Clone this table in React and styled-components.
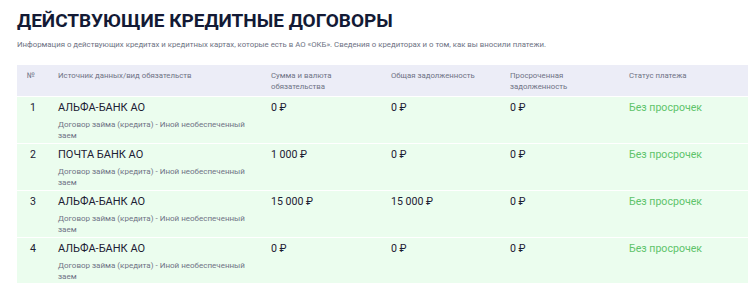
import React from "react";
import styled, { createGlobalStyle } from "styled-components";

const GlobalStyle = createGlobalStyle`
  body {
    margin: 0;
    background: #ffffff;
    font-family: Roboto, "Noto Sans", sans-serif;
    overflow: hidden;
  }
`;

const Page = styled.div`
  padding: 10px 0 0 17px;
`;

const Title = styled.h1`
  margin: 0;
  font-size: 19px;
  line-height: 22px;
  font-weight: 700;
  color: #131a35;
`;

const Subtitle = styled.p`
  margin: 7px 0 0;
  font-size: 7.8px;
  line-height: 11px;
  color: #6d7283;
`;

const Table = styled.div`
  margin-top: 15px;
  display: flex;
  flex-direction: column;
  gap: 1px;
`;

const Row = styled.div`
  display: grid;
  grid-template-columns: 31px 213px 120px 119px 119px 1fr;
  background: ${(p) => (p.$head ? "#ecedf7" : "#ebfdee")};
  height: ${(p) => (p.$head ? "31px" : "46px")};
  padding-top: ${(p) => (p.$head ? "5px" : "4px")};
  box-sizing: border-box;
`;

const HeadCell = styled.div`
  padding-left: 10px;
  padding-right: 6px;
  font-size: 7.8px;
  line-height: 11px;
  color: #6f7385;
`;

const Cell = styled.div`
  padding-left: ${(p) => (p.$num ? "13px" : "10px")};
  font-size: ${(p) => (p.$ok ? "10.6px" : "10.6px")};
  line-height: 14px;
  color: ${(p) => (p.$ok ? "#5ec46b" : "#1c2033")};
`;

const Bank = styled.div`
  font-size: 11px;
  line-height: 14px;
  color: #1c2033;
`;

const Kind = styled.div`
  margin-top: 4px;
  font-size: 8px;
  line-height: 11px;
  color: #6f7385;
  width: 198px;
`;

const rows = [
  { n: 1, bank: "АЛЬФА-БАНК АО", sum: "0 ₽", total: "0 ₽", overdue: "0 ₽" },
  { n: 2, bank: "ПОЧТА БАНК АО", sum: "1 000 ₽", total: "0 ₽", overdue: "0 ₽" },
  { n: 3, bank: "АЛЬФА-БАНК АО", sum: "15 000 ₽", total: "15 000 ₽", overdue: "0 ₽" },
  { n: 4, bank: "АЛЬФА-БАНК АО", sum: "0 ₽", total: "0 ₽", overdue: "0 ₽" },
];

export default function App() {
  return (
    <Page>
      <GlobalStyle />
      <Title>ДЕЙСТВУЮЩИЕ КРЕДИТНЫЕ ДОГОВОРЫ</Title>
      <Subtitle>
        Информация о действующих кредитах и кредитных картах, которые есть в АО «ОКБ». Сведения о кредиторах и о том, как вы вносили платежи.
      </Subtitle>
      <Table>
        <Row $head>
          <HeadCell>№</HeadCell>
          <HeadCell>Источник данных/вид обязательств</HeadCell>
          <HeadCell>Сумма и валюта обязательства</HeadCell>
          <HeadCell>Общая задолженность</HeadCell>
          <HeadCell>Просроченная задолженность</HeadCell>
          <HeadCell>Статус платежа</HeadCell>
        </Row>
        {rows.map((r) => (
          <Row key={r.n}>
            <Cell $num>{r.n}</Cell>
            <Cell>
              <Bank>{r.bank}</Bank>
              <Kind>Договор займа (кредита) - Иной необеспеченный заем</Kind>
            </Cell>
            <Cell>{r.sum}</Cell>
            <Cell>{r.total}</Cell>
            <Cell>{r.overdue}</Cell>
            <Cell $ok>Без просрочек</Cell>
          </Row>
        ))}
      </Table>
    </Page>
  );
}
